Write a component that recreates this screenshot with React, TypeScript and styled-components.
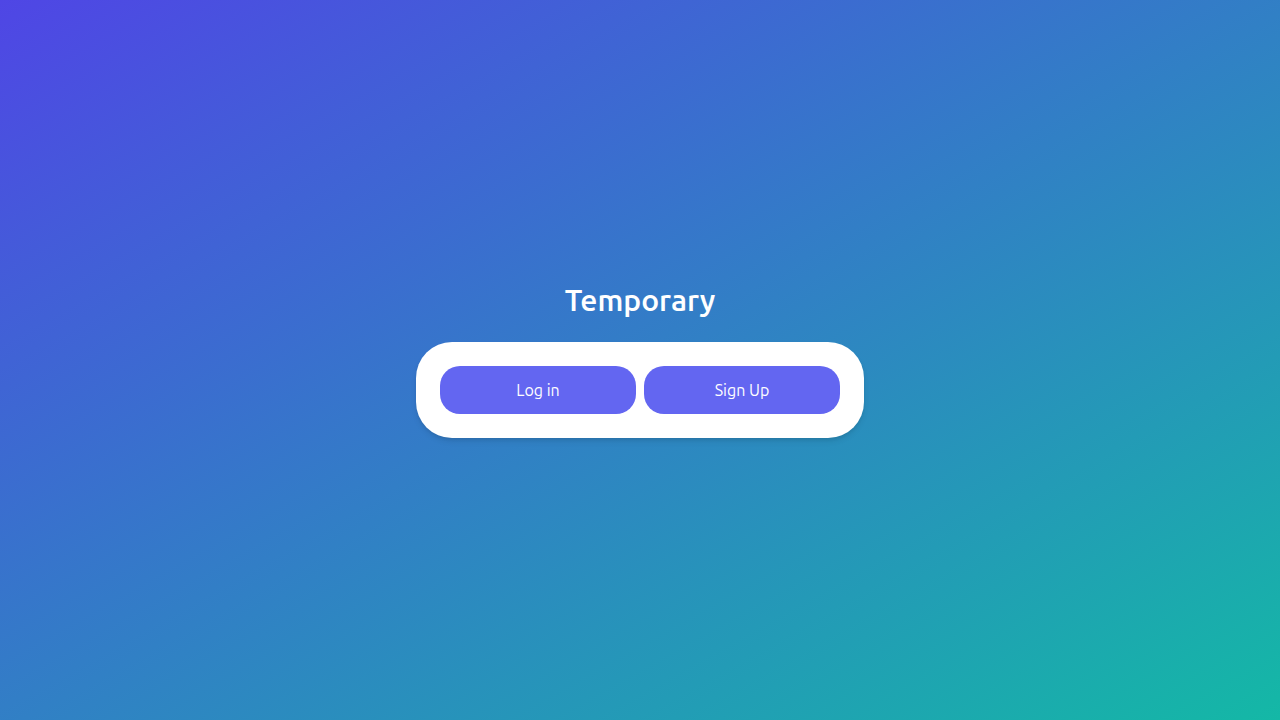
import React from "react";
import styled, { createGlobalStyle } from "styled-components";

const GlobalStyle = createGlobalStyle`
  *, *::before, *::after {
    box-sizing: border-box;
  }

  body {
    margin: 0;
    font-family: Ubuntu, "Noto Sans", sans-serif;
    line-height: 24px;
  }
`;

const Page = styled.main`
  display: flex;
  flex-direction: column;
  align-items: center;
  justify-content: center;
  min-height: 100vh;
  color: #fff;
  background: linear-gradient(to bottom right, #4f46e5, #14b8a6);
`;

const Title = styled.h1`
  margin: 0 0 22px;
  font-family: "Ubuntu Sans", Ubuntu, "Noto Sans", sans-serif;
  font-size: 30px;
  line-height: 38px;
  font-weight: 600;
`;

const Card = styled.section`
  display: grid;
  grid-template-columns: 1fr 1fr;
  gap: 8px;
  width: 100%;
  max-width: 448px;
  padding: 24px;
  border-radius: 36px;
  background: #fff;
  box-shadow: 0 4px 6px -1px rgba(0, 0, 0, 0.1), 0 2px 4px -2px rgba(0, 0, 0, 0.1);
`;

const ActionButton = styled.button`
  padding: 12px;
  border: 0;
  border-radius: 20px;
  color: #fff;
  background: #6366f1;
  font-family: inherit;
  font-size: 16px;
  font-weight: 400;
  line-height: 24px;
  cursor: pointer;
`;

export default function App() {
  return (
    <>
      <GlobalStyle />
      <Page>
        <Title>Temporary</Title>
        <Card>
          <ActionButton type="button">Log in</ActionButton>
          <ActionButton type="button">Sign Up</ActionButton>
        </Card>
      </Page>
    </>
  );
}
